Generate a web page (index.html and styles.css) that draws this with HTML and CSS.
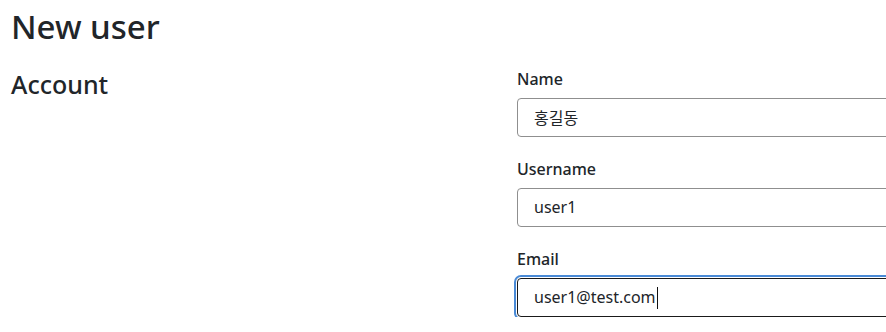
FILE: index.html
```html
<!DOCTYPE html>
<html lang="en">
<head>
    <meta charset="UTF-8">
    <title>New user</title>
    <meta name="viewport" content="width=device-width, initial-scale=1.0">
    <link rel="stylesheet" href="styles.css">
</head>
<body>
    <div class="page">
        <h1>New user</h1>
        <div class="section">
            <h3>Account</h3>
            <form class="fields">
                <div class="field">
                    <label for="name">Name</label>
                    <input id="name" type="text" value="홍길동">
                </div>
                <div class="field">
                    <label for="username">Username</label>
                    <input id="username" type="text" value="user1">
                </div>
                <div class="field">
                    <label for="email">Email</label>
                    <input id="email" class="focused" type="text" value="user1@test.com"><span class="caret"></span>
                </div>
            </form>
        </div>
    </div>
</body>
</html>
```

FILE: styles.css
```css
html, body {
    margin: 0;
    padding: 0;
    overflow: hidden;
    background: #fff;
}
body {
    font-family: "Noto Sans", "Noto Sans CJK KR", sans-serif;
    color: #212529;
}
.page {
    padding: 0 11px;
    width: 940px;
}
h1 {
    font-size: 33px;
    font-weight: 500;
    line-height: 1.2;
    margin: 7px 0 21px;
}
.section {
    display: grid;
    grid-template-columns: 506px 420px;
}
h3 {
    font-size: 25px;
    font-weight: 500;
    line-height: 1.2;
    margin: 1px 0 0;
}
.fields {
    display: flex;
    flex-direction: column;
    gap: 21px;
}
.field {
    position: relative;
    display: flex;
    flex-direction: column;
    gap: 8px;
}
label {
    font-size: 16px;
    font-weight: 500;
    line-height: 21px;
    margin-top: 1px;
}
input {
    font-family: "Noto Sans", "Noto Sans CJK KR", sans-serif;
    font-size: 16px;
    color: #212529;
    height: 39px;
    box-sizing: border-box;
    padding: 0 16px;
    border: 1px solid #8f8f8f;
    border-radius: 4px;
    outline: none;
    background: #fff;
}
input.focused {
    border-color: #1a1a1a;
    box-shadow: 0 0 0 1px #fff, 0 0 0 3px #4a8ad6;
}
.caret {
    position: absolute;
    left: 140px;
    bottom: 8px;
    width: 1px;
    height: 22px;
    background: #111;
}
```
